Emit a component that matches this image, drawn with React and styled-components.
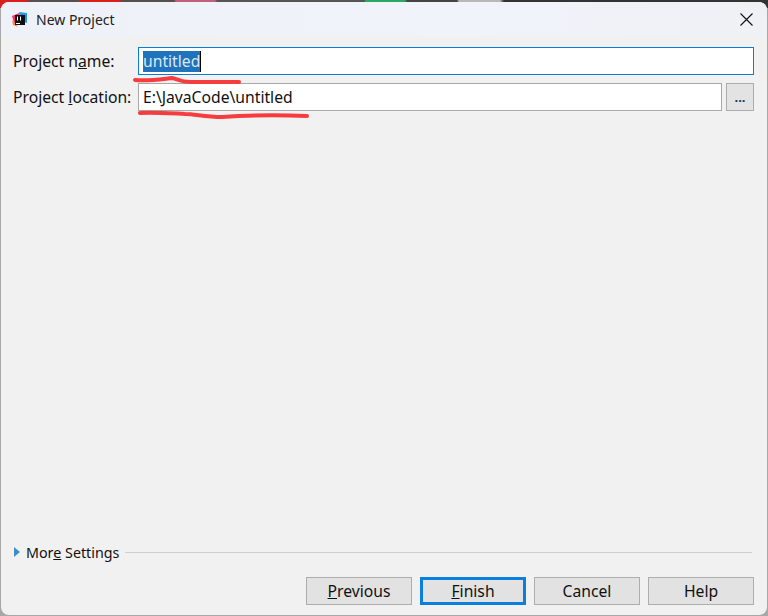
import styled, { createGlobalStyle } from "styled-components";

const Global = createGlobalStyle`
  html, body {
    margin: 0;
    padding: 0;
    background: #a8a8a8;
  }
`;

const Screen = styled.div`
  width: 768px;
  height: 616px;
  overflow: hidden;
  padding: 2px 1px 1px 1px;
  box-sizing: border-box;
  background:
    linear-gradient(
      90deg,
      #d8201c 0 26px,
      #55504e 30px 78px,
      #d8201c 80px 120px,
      #55504e 122px 174px,
      #c0607c 176px 215px,
      #555555 217px 364px,
      #2aa860 366px 405px,
      #444444 407px 457px,
      #b8b8b8 459px 500px,
      #333333 504px 768px
    ) top / 100% 2px no-repeat,
    linear-gradient(#d8201c, #d8201c) top left / 8px 8px no-repeat,
    linear-gradient(#333333, #333333) top right / 8px 8px no-repeat,
    #a8a8a8;
`;

const Dialog = styled.div`
  position: relative;
  height: 100%;
  box-sizing: border-box;
  display: flex;
  flex-direction: column;
  background: #f1f1f1;
  border-radius: 8px;
  overflow: hidden;
  font-family: "Noto Sans", "Open Sans", sans-serif;
  font-size: 15.7px;
  color: #111;
`;

const TitleBar = styled.div`
  height: 35px;
  display: flex;
  align-items: center;
  padding: 0 14px 0 11px;
  gap: 8px;
  background: linear-gradient(90deg, #eef1f8, #f0f3fa 60%, #eff1f5);
`;

const Title = styled.div`
  flex: 1;
  font-size: 14px;
  color: #222;
`;

const Close = styled.div`
  width: 13px;
  height: 13px;
  display: flex;
`;

const Form = styled.div`
  flex: 1;
  display: flex;
  flex-direction: column;
  gap: 8px;
  padding: 10px 13px 0 12px;
`;

const Row = styled.div`
  display: grid;
  grid-template-columns: ${(p) => (p.$browse ? "121px 1fr 28px" : "125px 1fr")};
  column-gap: ${(p) => (p.$browse ? "4px" : "0")};
  align-items: center;
  height: 28px;
`;

const Label = styled.label`
  white-space: nowrap;
`;

const Field = styled.div`
  height: 28px;
  box-sizing: border-box;
  display: flex;
  align-items: center;
  padding: 0 4px;
  background: #fff;
  border: 1px solid ${(p) => (p.$focused ? "#0a7dd6" : "#a8a8a8")};
`;

const Selected = styled.span`
  background: #1f73bd;
  color: #dbe8f4;
  border-right: 1px solid #000;
  line-height: 21px;
`;

const Underline = styled.span`
  text-decoration: underline;
`;

const Browse = styled.div`
  height: 28px;
  box-sizing: border-box;
  display: flex;
  justify-content: center;
  align-items: center;
  background: #e3e3e3;
  border: 1px solid #adadad;
  font-size: 13px;
  font-weight: 700;
  color: #123a66;
`;

const MoreRow = styled.div`
  display: flex;
  align-items: center;
  gap: 6px;
  padding: 0 15px 0 13px;
  height: 20px;
  font-size: 14.3px;
`;

const Arrow = styled.div`
  width: 0;
  height: 0;
  border-left: 6px solid #3d8fc9;
  border-top: 5px solid transparent;
  border-bottom: 5px solid transparent;
`;

const Rule = styled.div`
  flex: 1;
  height: 1px;
  background: #cfcfcf;
`;

const Footer = styled.div`
  display: flex;
  justify-content: flex-end;
  gap: 8px;
  padding: 15px 13px 10px 0;
`;

const Button = styled.div`
  width: 106px;
  height: 28px;
  box-sizing: border-box;
  display: flex;
  justify-content: center;
  align-items: center;
  background: #e2e2e2;
  border: ${(p) => (p.$primary ? "3px solid #0a80dc" : "1px solid #adadad")};
`;

const Marks = styled.svg`
  position: absolute;
  left: -1px;
  top: -2px;
  pointer-events: none;
`;

function AppIcon() {
  return (
    <svg width="16" height="16" viewBox="0 0 16 16">
      <path d="M0 4 L7 1 L9 8 L2 11 Z" fill="#f5366c" />
      <path d="M7 0 L15 1 L15 11 L9 9 Z" fill="#1f9be8" />
      <path d="M0 8 L6 15 L1 13 Z" fill="#f78a2a" />
      <rect x="3" y="3" width="10" height="10" fill="#111" />
      <rect x="4" y="11" width="4" height="1" fill="#fff" />
      <rect x="5" y="4.5" width="1" height="4" fill="#fff" />
      <rect x="8" y="4.5" width="1" height="4" fill="#fff" />
    </svg>
  );
}

export default function App() {
  return (
    <>
      <Global />
      <Screen>
        <Dialog>
          <TitleBar>
            <AppIcon />
            <Title>New Project</Title>
            <Close>
              <svg width="13" height="13" viewBox="0 0 13 13">
                <path d="M.5.5l12 12M12.5.5l-12 12" stroke="#111" strokeWidth="1.1" fill="none" />
              </svg>
            </Close>
          </TitleBar>
          <Form>
            <Row>
              <Label>Project n<Underline>a</Underline>me:</Label>
              <Field $focused><Selected>untitled</Selected></Field>
            </Row>
            <Row $browse>
              <Label>Project <Underline>l</Underline>ocation:</Label>
              <Field>E:\JavaCode\untitled</Field>
              <Browse>...</Browse>
            </Row>
          </Form>
          <MoreRow>
            <Arrow />
            <span>Mor<Underline>e</Underline> Settings</span>
            <Rule />
          </MoreRow>
          <Footer>
            <Button><span><Underline>P</Underline>revious</span></Button>
            <Button $primary><span><Underline>F</Underline>inish</span></Button>
            <Button>Cancel</Button>
            <Button>Help</Button>
          </Footer>
          <Marks width="768" height="616" viewBox="0 0 768 616">
            <path d="M135 80 C150 81 162 79 172 78 C178 79 180 82 190 82 L239 82" stroke="#f53c3e" strokeWidth="4" fill="none" strokeLinecap="round" />
            <path d="M140 113 C150 112 165 113 185 114 C195 114 205 117 222 117 C250 115 280 115 307 116" stroke="#f53c3e" strokeWidth="4" fill="none" strokeLinecap="round" />
          </Marks>
        </Dialog>
      </Screen>
    </>
  );
}
